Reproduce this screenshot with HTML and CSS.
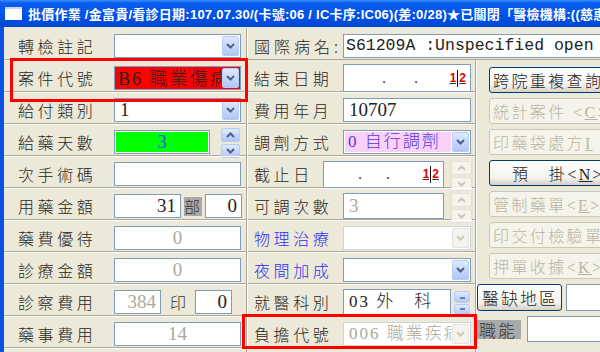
FILE: index.html
```html
<!DOCTYPE html>
<html lang="zh-Hant">
<head>
<meta charset="UTF-8" />
<title>批價作業</title>
<link rel="stylesheet" href="styles.css">
</head>
<body>
<div class="titlebar">
  <span class="appicon"></span>
  <span class="title">批價作業 /金富貴/看診日期:107.07.30/(卡號:06 / IC卡序:IC06)(差:0/28)★已關閉「醫檢機構:((慈惠診所</span>
</div>

<div class="frame">
  <!-- left column -->
  <div class="col left">
    <div class="row">
      <span class="lbl">轉檢註記</span>
      <div class="fld combo w-full"><span class="val"></span><span class="dd"><svg width="9" height="6" viewBox="0 0 9 6"><path d="M1 1l3.5 3.5L8 1"/></svg></span></div>
    </div>
    <div class="row">
      <span class="lbl">案件代號</span>
      <div class="fld combo w-full red"><span class="val">B6 職業傷病</span><span class="dd"><svg width="9" height="6" viewBox="0 0 9 6"><path d="M1 1l3.5 3.5L8 1"/></svg></span></div>
    </div>
    <div class="row">
      <span class="lbl">給付類別</span>
      <div class="fld combo w-full"><span class="val">1</span><span class="dd"><svg width="9" height="6" viewBox="0 0 9 6"><path d="M1 1l3.5 3.5L8 1"/></svg></span></div>
    </div>
    <div class="row">
      <span class="lbl">給藥天數</span>
      <div class="fld green"><span class="val center blue-txt">3</span></div>
      <div class="spin">
        <span class="sb"><svg width="9" height="6" viewBox="0 0 9 6"><path d="M1 5l3.5-3.5L8 5"/></svg></span>
        <span class="sb"><svg width="9" height="6" viewBox="0 0 9 6"><path d="M1 1l3.5 3.5L8 1"/></svg></span>
      </div>
    </div>
    <div class="row">
      <span class="lbl">次手術碼</span>
      <div class="fld w-full"></div>
    </div>
    <div class="row">
      <span class="lbl">用藥金額</span>
      <div class="fld w-amt"><span class="val right">31</span></div>
      <span class="tag">部</span>
      <div class="fld w-sm"><span class="val right">0</span></div>
    </div>
    <div class="row">
      <span class="lbl">藥費優待</span>
      <div class="fld w-full"><span class="val center dim">0</span></div>
    </div>
    <div class="row">
      <span class="lbl">診療金額</span>
      <div class="fld w-full"><span class="val center dim">0</span></div>
    </div>
    <div class="row">
      <span class="lbl">診察費用</span>
      <div class="fld w-fee"><span class="val right dim">384</span></div>
      <span class="stamp">印</span>
      <div class="fld w-sm"><span class="val right">0</span></div>
    </div>
    <div class="row">
      <span class="lbl">藥事費用</span>
      <div class="fld w-full"><span class="val center dim">14</span></div>
    </div>
    <div class="row">
      <span class="lbl"></span>
      <div class="fld w-full"></div>
    </div>
  </div>

  <div class="main">
    <div class="row icd">
      <span class="lbl">國際病名:</span>
      <div class="fld memo">
        <span class="mono">S61209A :Unspecified open</span>
        <span class="mono">wound of unspecified finger without</span>
      </div>
    </div>

    <div class="split">
      <!-- middle column -->
      <div class="col mid">
        <div class="row">
          <span class="lbl">結束日期</span>
          <div class="fld w-mid tall date"><span class="dots">.&nbsp;&nbsp;&nbsp;&nbsp;&nbsp;&nbsp;&nbsp;.</span><span class="caret"><b>1</b><i></i><b>2</b></span></div>
        </div>
        <div class="row">
          <span class="lbl">費用年月</span>
          <div class="fld w-mid"><span class="val">10707</span></div>
        </div>
        <div class="row">
          <span class="lbl">調劑方式</span>
          <div class="fld combo w-mid pink"><span class="val cjk violet">0 自行調劑</span><span class="dd"><svg width="9" height="6" viewBox="0 0 9 6"><path d="M1 1l3.5 3.5L8 1"/></svg></span></div>
        </div>
        <div class="row">
          <span class="lbl short">截止日</span>
          <div class="fld w-stop date"><span class="dots dim">.&nbsp;&nbsp;&nbsp;&nbsp;&nbsp;&nbsp;.</span><span class="caret"><b>1</b><i></i><b>2</b></span></div>
          <div class="spin off">
            <span class="sb"><svg width="9" height="6" viewBox="0 0 9 6"><path d="M1 5l3.5-3.5L8 5"/></svg></span>
            <span class="sb"><svg width="9" height="6" viewBox="0 0 9 6"><path d="M1 1l3.5 3.5L8 1"/></svg></span>
          </div>
        </div>
        <div class="row">
          <span class="lbl">可調次數</span>
          <div class="fld w-cnt"><span class="val dim">3</span></div>
          <div class="spin off">
            <span class="sb"><svg width="9" height="6" viewBox="0 0 9 6"><path d="M1 5l3.5-3.5L8 5"/></svg></span>
            <span class="sb"><svg width="9" height="6" viewBox="0 0 9 6"><path d="M1 1l3.5 3.5L8 1"/></svg></span>
          </div>
        </div>
        <div class="row">
          <span class="lbl blue-lbl">物理治療</span>
          <div class="fld combo w-mid off"><span class="val"></span><span class="dd"><svg width="9" height="6" viewBox="0 0 9 6"><path d="M1 1l3.5 3.5L8 1"/></svg></span></div>
        </div>
        <div class="row">
          <span class="lbl blue-lbl">夜間加成</span>
          <div class="fld combo w-mid"><span class="val"></span><span class="dd"><svg width="9" height="6" viewBox="0 0 9 6"><path d="M1 1l3.5 3.5L8 1"/></svg></span></div>
        </div>
        <div class="row">
          <span class="lbl">就醫科別</span>
          <div class="fld w-dept"><span class="val cjk">03 外　科</span></div>
          <div class="spin mini">
            <span class="sb"><svg width="7" height="4" viewBox="0 0 7 4"><path d="M1 3h5"/></svg></span>
            <span class="sb"><svg width="7" height="4" viewBox="0 0 7 4"><path d="M1 1h5"/></svg></span>
          </div>
        </div>
        <div class="row">
          <span class="lbl">負擔代號</span>
          <div class="fld combo w-mid off"><span class="val cjk dim">006 職業疾病</span><span class="dd"><svg width="9" height="6" viewBox="0 0 9 6"><path d="M1 1l3.5 3.5L8 1"/></svg></span></div>
        </div>
      </div>

      <!-- right column -->
      <div class="col side">
        <button class="btn">跨院重複查詢</button>
        <button class="btn" disabled>統計案件 &lt;<u>C</u>&gt;</button>
        <button class="btn" disabled>印藥袋處方<u>I</u></button>
        <button class="btn btn-pad">預　掛&lt;<u>N</u>&gt;</button>
        <button class="btn" disabled>管制藥單&lt;<u>E</u>&gt;</button>
        <button class="btn" disabled>印交付檢驗單</button>
        <button class="btn" disabled>押單收據&lt;<u>K</u>&gt;</button>
        <div class="side-row">
          <button class="btn btn-area">醫缺地區</button>
          <div class="fld grow"></div>
        </div>
        <div class="side-row func">
          <span class="tag wide">職能</span>
          <div class="fld grow"></div>
        </div>
      </div>
    </div>
  </div>

  <div class="mark mark-case"></div>
  <div class="mark mark-pay"></div>
</div>
</body>
</html>
```

FILE: styles.css
```css
/* base */
* {
  box-sizing: border-box;
}
body {
  margin: 0;
  width: 600px;
  height: 352px;
  overflow: hidden;
  background: #ece9d8;
  font-family: "Noto Sans CJK TC", sans-serif;
  color: #222;
}

/* title bar */
.titlebar {
  height: 27px;
  display: flex;
  align-items: center;
  padding-left: 5px;
  background: linear-gradient(#3c8cf8 0, #0a5ef0 3px, #0052e4 60%, #0046d4 100%);
  white-space: nowrap;
  overflow: hidden;
}
.appicon {
  width: 17px;
  height: 13px;
  background: #fff;
  border-top: 2px solid #c8d4ee;
  flex: none;
  margin-right: 6px;
}
.title {
  color: #fff;
  font-family: "Liberation Sans", "Noto Sans CJK TC", sans-serif;
  font-weight: 700;
  font-size: 13px;
  letter-spacing: 0.25px;
}

/* frame */
.frame {
  position: relative;
  display: flex;
  height: 325px;
  border-left: 4px solid #0a50e4;
  padding-top: 1px;
  overflow: hidden;
}
.col {
  display: flex;
  flex-direction: column;
}
.left {
  width: 243px;
  flex: none;
  border-right: 1px solid #aca899;
  box-shadow: 1px 0 0 #fff;
}
.main {
  flex: 1;
  display: flex;
  flex-direction: column;
  min-width: 0;
  padding-left: 1px;
}
.split {
  display: flex;
  flex: 1;
}
.mid {
  width: 228px;
  flex: none;
  border-right: 1px solid #aca899;
  box-shadow: 1px 0 0 #fff;
}
.side {
  flex: 1;
  padding: 7px 0 0 13px;
  gap: 5px;
  overflow: hidden;
}

/* rows */
.row {
  height: 32px;
  flex: none;
  display: flex;
  align-items: center;
  padding-top: 4px;
  border-top: 1px solid #fff;
  border-bottom: 1px solid #aca899;
}
.row:first-child {
  border-top-color: transparent;
}
.lbl {
  width: 110px;
  flex: none;
  padding-left: 14px;
  font-size: 16px;
  font-weight: 300;
  letter-spacing: 3.6px;
  color: #262626;
  white-space: nowrap;
}
.mid .lbl {
  width: 95px;
  padding-left: 6px;
}
.mid .lbl.short {
  width: 75px;
}
.icd .lbl {
  width: 95px;
  padding-left: 6px;
  letter-spacing: 4px;
}
.blue-lbl {
  color: #2f2ff0;
}

/* fields */
.fld {
  height: 24px;
  display: flex;
  align-items: center;
  border: 1px solid #7f9db9;
  background: #fff;
  overflow: hidden;
  flex: none;
}
.val {
  flex: 1;
  padding: 0 5px;
  font-family: "Liberation Serif", "Noto Sans CJK TC", serif;
  font-size: 19px;
  line-height: 22px;
  white-space: nowrap;
  overflow: hidden;
}
.val.cjk {
  font-size: 17px;
  font-weight: 300;
  letter-spacing: 2px;
}
.center {
  text-align: center;
}
.right {
  text-align: right;
  padding-right: 4px;
}
.dim {
  color: #aca899;
}
.blue-txt {
  color: #1a5cf0;
}
.violet {
  color: #5a38d8;
}

.w-full {
  width: 127px;
}
.w-amt {
  width: 67px;
}
.w-sm {
  width: 37px;
}
.w-fee {
  width: 47px;
}
.w-mid {
  width: 128px;
}
.w-stop {
  width: 121px;
  height: 27px;
}
.w-cnt {
  width: 101px;
  height: 26px;
}
.w-dept {
  width: 108px;
  height: 26px;
}
.tall {
  height: 28px;
}

.red {
  background: #ff0000;
}
.red .val {
  font-size: 18px;
  font-weight: 300;
  letter-spacing: 2px;
  padding-left: 2px;
  margin: 1px 0 1px 1px;
  background: #ff0000;
}
.green {
  width: 96px;
  padding: 1px;
}
.green .val {
  background: #00ff00;
  height: 100%;
  line-height: 20px;
}
.pink .val {
  background: #f8d0f8;
  align-self: stretch;
  margin: 1px 0 1px 1px;
  line-height: 20px;
  padding-left: 3px;
}
.tag {
  margin-left: 3px;
  margin-right: 3px;
  width: 18px;
  height: 19px;
  line-height: 19px;
  background: #a9a9a9;
  font-size: 16px;
  font-weight: 300;
  color: #333;
}
.stamp {
  width: 34px;
  text-align: center;
  font-size: 16px;
  font-weight: 300;
  color: #333;
}

/* date field */
.date {
  justify-content: space-between;
  padding: 0 4px 0 38px;
}
.w-stop.date {
  padding-left: 34px;
}
.dots {
  font-family: "Liberation Serif", serif;
  font-size: 16px;
  color: #444;
}
.caret {
  display: flex;
  align-items: center;
  font-family: "Liberation Sans", sans-serif;
  font-weight: 700;
  font-size: 12px;
}
.caret b {
  color: #e00000;
  text-decoration: underline;
  text-decoration-color: #333;
}
.caret i {
  width: 1px;
  height: 17px;
  background: #111;
  margin: 0 1px;
  box-shadow: -1px 0 0 #fff;
}

/* memo */
.memo {
  flex: 1;
  height: 24px;
  flex-direction: column;
  align-items: flex-start;
  padding: 1px 0 0 2px;
  border-right: 0;
}
.mono {
  font-family: "Liberation Mono", monospace;
  font-size: 16.5px;
  line-height: 19px;
  white-space: nowrap;
}

/* dropdown button */
.combo .val {
  align-self: stretch;
}
.dd {
  width: 17px;
  align-self: stretch;
  margin: 1px;
  flex: none;
  display: flex;
  align-items: center;
  justify-content: center;
  border: 1px solid #b8cbf4;
  border-radius: 2px;
  background: linear-gradient(#e0e9fe, #c2d4fb 60%, #b1c6f5);
}
.dd path,
.sb path {
  fill: none;
  stroke: #4d6185;
  stroke-width: 2;
}
.off .dd,
.off .sb {
  border-color: #e4e2d8;
  background: #f4f3ee;
}
.off .dd path,
.off .sb path {
  stroke: #c9c7ba;
}
.fld.off {
  border-color: #ccd4dc;
}

/* spinner */
.spin {
  display: flex;
  flex-direction: column;
  gap: 2px;
  margin-left: 11px;
  width: 19px;
  align-self: flex-start;
  margin-top: -1px;
}
.mid .spin {
  margin-left: 7px;
  width: 21px;
  margin-top: 0;
}
.sb {
  height: 14px;
  display: flex;
  align-items: center;
  justify-content: center;
  border: 1px solid #b8cbf4;
  border-radius: 2px;
  background: linear-gradient(#e0e9fe, #c2d4fb 60%, #b1c6f5);
}
.spin.mini {
  margin-left: 3px;
  width: 16px;
  gap: 1px;
  margin-top: 2px;
}
.spin.mini .sb {
  height: 12px;
  border-radius: 3px;
}
.spin.mini path {
  stroke-width: 1.5;
}

/* buttons */
.btn {
  width: 130px;
  height: 26px;
  flex: none;
  padding: 0 0 0 3px;
  text-align: left;
  border: 1px solid #003c74;
  border-radius: 3px;
  background: linear-gradient(#fff, #f3f3ef 70%, #d6d0c5);
  font-family: "Liberation Serif", "Noto Sans CJK TC", serif;
  font-size: 16px;
  font-weight: 300;
  letter-spacing: 2.4px;
  color: #222;
  white-space: nowrap;
  overflow: hidden;
}
.btn:disabled {
  border-color: #c9c7ba;
  background: #f5f4ea;
  color: #b8b4a2;
}
.btn-pad {
  padding-left: 22px;
}
.side-row {
  display: flex;
  align-items: center;
  margin-left: -12px;
  gap: 4px;
}
.btn-area {
  width: 85px;
  height: 27px;
  padding-left: 4px;
  font-size: 17px;
  letter-spacing: 2px;
}
.grow {
  flex: 1;
  height: 27px;
  border-right: 0;
}
.func {
  gap: 6px;
}
.func .grow {
  height: 26px;
}
.tag.wide {
  width: 44px;
  margin: 0;
  padding-left: 2px;
  font-size: 17px;
  letter-spacing: 2px;
}

/* red annotation boxes */
.mark {
  position: absolute;
  border: 3px solid #ff0000;
  pointer-events: none;
}
.mark-case {
  left: 6px;
  top: 31px;
  width: 238px;
  height: 44px;
}
.mark-pay {
  left: 238px;
  top: 287px;
  width: 235px;
  height: 35px;
}
```
